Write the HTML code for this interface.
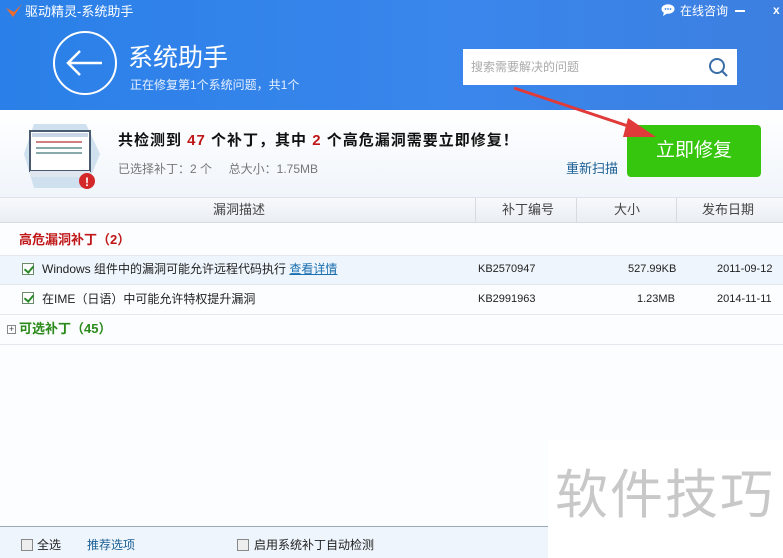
<!DOCTYPE html>
<html><head><meta charset="utf-8"><style>
*{margin:0;padding:0;box-sizing:border-box}
body{width:783px;height:558px;overflow:hidden;position:relative;background:#fcfdff;font-family:"Liberation Sans","Noto Sans CJK SC",sans-serif;font-size:12px;color:#222;line-height:1.2}
.hd{position:absolute;left:0;top:0;width:783px;height:110px;background:linear-gradient(90deg,#2a80e8,#3a86ec 60%,#3c7fe0)}
.ab{position:absolute}
.info{position:absolute;left:0;top:110px;width:783px;height:87px;background:linear-gradient(#fff,#f0f5fb)}
.cols{position:absolute;left:0;top:197px;width:783px;height:26px;background:linear-gradient(#f7f9fc,#eaeef3);border-top:1px solid #dfe4ea;border-bottom:1px solid #d8dde3;color:#444;font-size:13px}
.row{position:absolute;left:0;width:783px;border-bottom:1px solid #e2e8ee}
.cb{position:absolute;width:12px;height:12px;border:1px solid #6a8a6a;background:#fff}
.cb.on::after{content:"";position:absolute;left:3px;top:0px;width:4px;height:7px;border:solid #2a8a2a;border-width:0 2px 2px 0;transform:rotate(40deg)}
</style></head><body>
<div class="hd"></div>
<svg class="ab" style="left:5px;top:3px" width="18" height="16"><path d="M1 5 L8 14 L17 1 L9 9 Z" fill="#f06a2a"/></svg>
<div class="ab" style="left:25px;top:4px;color:#fff;font-size:13px">驱动精灵-系统助手</div>
<svg class="ab" style="left:661px;top:4px" width="14" height="12"><ellipse cx="7" cy="5" rx="6.5" ry="4.8" fill="#fff"/><path d="M3 8 L2 12 L7 9Z" fill="#fff"/><circle cx="4.5" cy="5" r="0.9" fill="#3a86ec"/><circle cx="7" cy="5" r="0.9" fill="#3a86ec"/><circle cx="9.5" cy="5" r="0.9" fill="#3a86ec"/></svg>
<div class="ab" style="left:680px;top:4px;color:#fff;font-size:12px">在线咨询</div>
<div class="ab" style="left:735px;top:10px;width:10px;height:2px;background:#fff"></div>
<div class="ab" style="left:773px;top:3px;color:#fff;font-size:12px;font-weight:bold">x</div>
<svg class="ab" style="left:52px;top:30px" width="66" height="66"><circle cx="33" cy="33" r="31" fill="none" stroke="#fff" stroke-width="2"/><path d="M16 33 H50 M28 21 L16 33 L28 45" fill="none" stroke="#fff" stroke-width="2.5"/></svg>
<div class="ab" style="left:128px;top:43px;color:#fff;font-size:25px">系统助手</div>
<div class="ab" style="left:130px;top:78px;color:#e6f0ff;font-size:12px">正在修复第1个系统问题，共1个</div>
<div class="ab" style="left:463px;top:49px;width:274px;height:36px;background:#fff"></div>
<div class="ab" style="left:471px;top:60px;color:#aaa;font-size:12px">搜索需要解决的问题</div>
<svg class="ab" style="left:708px;top:57px" width="22" height="22"><circle cx="9" cy="9" r="7" fill="none" stroke="#3a6ea8" stroke-width="2"/><path d="M14 14 L19 19" stroke="#3a6ea8" stroke-width="2.2"/></svg>
<div class="info"></div>
<svg class="ab" style="left:24px;top:122px" width="76" height="70"><path d="M10 2 H62 L76 32 L62 66 H10 L0 32 Z" fill="#cfe0ef"/><rect x="6" y="9" width="60" height="40" fill="#fff" stroke="#4a5a70" stroke-width="2"/><rect x="8" y="11" width="56" height="4" fill="#c8d6e6"/><rect x="12" y="19" width="46" height="2" fill="#d08080"/><rect x="12" y="25" width="46" height="2" fill="#8aa"/><rect x="12" y="30" width="46" height="2" fill="#8aa"/><rect x="6" y="49" width="60" height="6" fill="#e0e6ee"/><circle cx="63" cy="59" r="8" fill="#d3272a"/><text x="63" y="64" font-size="12" font-weight="bold" fill="#fff" text-anchor="middle" font-family="Liberation Sans">!</text></svg>
<div class="ab" style="left:118px;top:132px;font-size:15px;font-weight:bold;color:#111;letter-spacing:1px">共检测到 <span style="color:#c01818">47</span> 个补丁，其中 <span style="color:#c01818">2</span> 个高危漏洞需要立即修复！</div>
<div class="ab" style="left:118px;top:162px;color:#777;font-size:12px">已选择补丁：2 个 &nbsp; &nbsp; 总大小：1.75MB</div>
<div class="ab" style="left:566px;top:161px;color:#1a5f94;font-size:13px">重新扫描</div>
<div class="ab" style="left:627px;top:125px;width:134px;height:52px;background:#36c60e;border-radius:4px;color:#fff;font-size:19px;text-align:center;line-height:52px">立即修复</div>
<svg class="ab" style="left:510px;top:85px" width="150" height="60"><path d="M4 3 L130 45" stroke="#e03a3a" stroke-width="3"/><path d="M118 33 L146 52 L113 52 Z" fill="#e03a3a"/></svg>
<div class="cols">
<div class="ab" style="left:213px;top:4px">漏洞描述</div>
<div class="ab" style="left:475px;top:0;width:1px;height:24px;background:#d6dbe2"></div>
<div class="ab" style="left:502px;top:4px">补丁编号</div>
<div class="ab" style="left:576px;top:0;width:1px;height:24px;background:#d6dbe2"></div>
<div class="ab" style="left:614px;top:4px">大小</div>
<div class="ab" style="left:676px;top:0;width:1px;height:24px;background:#d6dbe2"></div>
<div class="ab" style="left:702px;top:4px">发布日期</div>
</div>
<div class="ab" style="left:19px;top:232px;color:#c01818;font-weight:bold;font-size:13px">高危漏洞补丁（2）</div>
<div class="row" style="top:255px;height:30px;background:#eef5fc;border-top:1px solid #e2e8ee"></div>
<div class="cb on" style="left:22px;top:263px"></div>
<div class="ab" style="left:42px;top:262px">Windows 组件中的漏洞可能允许远程代码执行 <span style="color:#1a6fb0;text-decoration:underline">查看详情</span></div>
<div class="ab" style="left:478px;top:263px;font-size:11px">KB2570947</div>
<div class="ab" style="left:628px;top:263px;font-size:11px">527.99KB</div>
<div class="ab" style="left:717px;top:263px;font-size:11px">2011-09-12</div>
<div class="row" style="top:285px;height:30px"></div>
<div class="cb on" style="left:22px;top:292px"></div>
<div class="ab" style="left:42px;top:292px">在IME（日语）中可能允许特权提升漏洞</div>
<div class="ab" style="left:478px;top:293px;font-size:11px">KB2991963</div>
<div class="ab" style="left:637px;top:293px;font-size:11px">1.23MB</div>
<div class="ab" style="left:717px;top:293px;font-size:11px">2014-11-11</div>
<div class="row" style="top:315px;height:30px"></div>
<div class="ab" style="left:7px;top:325px;width:9px;height:9px;border:1px solid #888;font-size:9px;line-height:7px;text-align:center;color:#444">+</div>
<div class="ab" style="left:19px;top:321px;color:#2a8a1a;font-weight:bold;font-size:13px">可选补丁（45）</div>
<div class="ab" style="left:0;top:526px;width:548px;height:32px;background:#eef5fc;border-top:1px solid #9aa8b4"></div>
<div class="cb" style="left:21px;top:539px;border-color:#888;background:#eee"></div>
<div class="ab" style="left:37px;top:538px">全选</div>
<div class="ab" style="left:87px;top:538px;color:#1a5f94">推荐选项</div>
<div class="cb" style="left:237px;top:539px;border-color:#888;background:#eee"></div>
<div class="ab" style="left:254px;top:538px">启用系统补丁自动检测</div>
<div class="ab" style="left:548px;top:440px;width:235px;height:118px;background:#fff"></div>
<div class="ab" style="left:555px;top:464px;color:#c8c8c8;font-size:53px;letter-spacing:2px">软件技巧</div>
</body></html>
